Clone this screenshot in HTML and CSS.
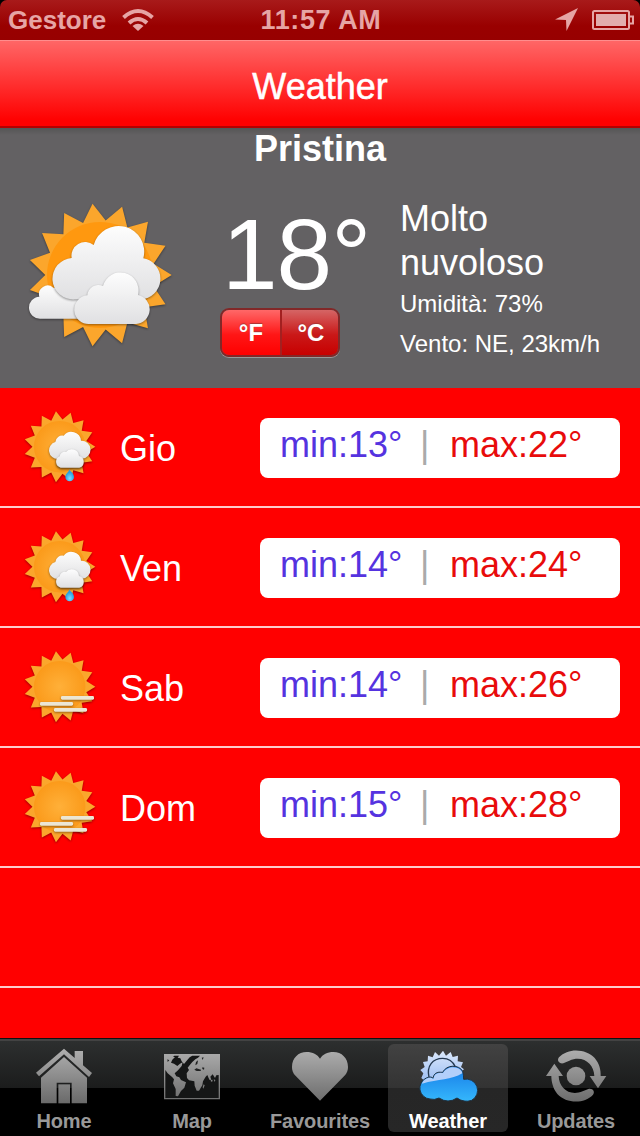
FILE: index.html
```html
<!DOCTYPE html>
<html lang="it">
<head>
  <meta charset="UTF-8" />
  <meta name="viewport" content="width=640" />
  <title>Weather</title>
  <link rel="stylesheet" href="styles.css">
</head>
<body>
  <!-- shared gradients and shapes -->
  <svg class="defs" width="0" height="0">
    <defs>
      <radialGradient id="sunDisc"><stop offset="0" stop-color="#ffb039"/><stop offset="1" stop-color="#fb9a1a"/></radialGradient>
      <linearGradient id="cloudFill" x1="0" y1="0" x2="0" y2="1"><stop offset="0" stop-color="#fdfdfd"/><stop offset="1" stop-color="#e0e0e2"/></linearGradient>
      <linearGradient id="tabFill" gradientUnits="userSpaceOnUse" x1="0" y1="85" x2="0" y2="250"><stop offset="0" stop-color="#b0b0b0"/><stop offset="1" stop-color="#6a6a6a"/></linearGradient>
      <linearGradient id="paleBlue" x1="0" y1="0" x2="0" y2="1"><stop offset="0" stop-color="#dce9fc"/><stop offset="1" stop-color="#9cbdf2"/></linearGradient>
      <linearGradient id="deepBlue" x1="0" y1="0" x2="0" y2="1"><stop offset="0" stop-color="#167be8"/><stop offset="1" stop-color="#35b7fb"/></linearGradient>
      <radialGradient id="dropFill" cy=".75"><stop offset="0" stop-color="#7fdcff"/><stop offset="1" stop-color="#2a9fe0"/></radialGradient>
      <symbol id="sun" viewBox="-72 -72 144 144" overflow="visible">
        <polygon fill="#fba62c" points="72,0 53.8,11.4 65.8,29.3 44.5,32.3 48.2,53.5 27.5,47.6 22.2,68.5 5.7,54.7 -7.5,71.6 -17,52.3 -36,62.4 -36.8,40.9 -58.2,42.3 -50.2,22.4 -70.4,15 -55,0 -70.4,-15 -50.2,-22.4 -58.2,-42.3 -36.8,-40.9 -36,-62.4 -17,-52.3 -7.5,-71.6 5.7,-54.7 22.2,-68.5 27.5,-47.6 48.2,-53.5 44.5,-32.3 65.8,-29.3 53.8,-11.4"/>
        <circle r="52" fill="url(#sunDisc)"/>
      </symbol>
      <symbol id="sun-rain" viewBox="60 51 240 240">
        <use href="#sun" class="cast" x="72" y="63" width="214" height="214"/>
        <g class="cast" fill="url(#cloudFill)" transform="translate(-4 0)">
          <path d="M178 207A26 26 0 0 1 170 156A21 21 0 0 1 195 137A29 29 0 0 1 247 152A27 27 0 0 1 250 206Z"/>
          <path class="cast" d="M186 233A18 18 0 0 1 183 199A15 15 0 0 1 202 186A22 22 0 0 1 241 198A18 18 0 0 1 242 233Z"/>
        </g>
        <path fill="url(#dropFill)" d="M208 238C211 245 222 250 222 261A13 13 0 0 1 196 261C196 251 207 247 208 238Z"/>
      </symbol>
      <symbol id="sun-haze" viewBox="60 51 240 240">
        <use href="#sun" class="cast" x="72" y="63" width="214" height="214"/>
        <g class="cast" fill="#ece6d3">
          <rect x="183" y="198" width="99" height="11" rx="4"/>
          <rect x="120" y="216" width="99" height="11" rx="4"/>
          <rect x="162" y="234" width="99" height="11" rx="4"/>
        </g>
      </symbol>
    </defs>
  </svg>

  <div class="screen">
    <header class="status-bar">
      <div class="carrier">
        <span>Gestore</span>
        <svg class="wifi" width="32" height="24" viewBox="0 0 32 24" fill="none" stroke="#e6a5a5" stroke-width="4">
          <path d="M1.500 9.500Q16 -3.500 30.500 9.500"/>
          <path d="M7 15Q16 7 25 15"/>
          <path d="M16 23L10.500 18Q16 13.500 21.500 18Z" fill="#e6a5a5" stroke="none"/>
        </svg>
      </div>
      <span class="clock">11:57 AM</span>
      <div class="indicators">
        <svg width="24" height="24" viewBox="0 0 24 24"><path d="M23 0L11.500 23L11 12L0 11.500Z" fill="#e6a5a5"/></svg>
        <svg width="42" height="20" viewBox="0 0 42 20">
          <rect x="1" y="1" width="36" height="18" rx="1.500" fill="none" stroke="#e6a5a5" stroke-width="2"/>
          <rect x="4" y="4" width="30" height="12" fill="#e2adad"/>
          <path d="M38 6.500H41V13.500H38" fill="none" stroke="#e6a5a5" stroke-width="2"/>
        </svg>
      </div>
    </header>

    <nav class="title-bar">Weather</nav>

    <section class="current">
      <h1 class="city">Pristina</h1>
      <div class="now">
        <svg class="now-icon" width="160" height="160" viewBox="60 45 480 480">
          <use href="#sun" class="cast" x="85" y="70" width="430" height="430"/>
          <circle cx="300" cy="285" r="159" fill="#ff980f"/>
          <g fill="url(#cloudFill)">
            <path class="cast" d="M122 416A33 33 0 0 1 118 350A26 26 0 0 1 160 323L250 340V416Z"/>
            <path class="cast" d="M224 358A62 62 0 0 1 215 234A41 41 0 0 1 281 195A76 76 0 0 1 430 235A62 62 0 0 1 422 358Z"/>
            <path class="cast" d="M270 432A43 43 0 0 1 262 346A33 33 0 0 1 309 318A54 54 0 0 1 414 345A44 44 0 0 1 408 432Z"/>
          </g>
        </svg>
        <div class="reading">
          <div class="temperature">18°</div>
          <div class="units">
            <span class="unit">°F</span>
            <span class="unit selected">°C</span>
          </div>
        </div>
        <div class="details">
          <p class="condition">Molto<br>nuvoloso</p>
          <p class="detail">Umidità: 73%</p>
          <p class="detail">Vento: NE, 23km/h</p>
        </div>
      </div>
    </section>

    <main class="forecast">
      <div class="day">
        <svg class="day-icon" width="80" height="80"><use href="#sun-rain"/></svg>
        <span class="day-name">Gio</span>
        <div class="range"><span class="min">min:13°</span><span class="bar">|</span><span class="max">max:22°</span></div>
      </div>
      <div class="day">
        <svg class="day-icon" width="80" height="80"><use href="#sun-rain"/></svg>
        <span class="day-name">Ven</span>
        <div class="range"><span class="min">min:14°</span><span class="bar">|</span><span class="max">max:24°</span></div>
      </div>
      <div class="day">
        <svg class="day-icon" width="80" height="80"><use href="#sun-haze"/></svg>
        <span class="day-name">Sab</span>
        <div class="range"><span class="min">min:14°</span><span class="bar">|</span><span class="max">max:26°</span></div>
      </div>
      <div class="day">
        <svg class="day-icon" width="80" height="80"><use href="#sun-haze"/></svg>
        <span class="day-name">Dom</span>
        <div class="range"><span class="min">min:15°</span><span class="bar">|</span><span class="max">max:28°</span></div>
      </div>
      <div class="day"></div>
    </main>

    <footer class="tab-bar">
      <div class="tab">
        <svg width="64" height="64" viewBox="96 72 192 192" fill="url(#tabFill)">
          <path d="M192 86L224 114V93H249V136L276 159L267 171L192 103L117 169L108 158Z"/>
          <path fill-rule="evenodd" d="M192 111L261 173V250H215V188H170V250H123V173Z"/>
          <path d="M175 193H210V250H175Z"/>
        </svg>
        <span>Home</span>
      </div>
      <div class="tab">
        <svg width="64" height="64" viewBox="480 72 192 192" fill="url(#tabFill)">
          <path d="M492 102H660V238H492Z"/>
          <path fill="#151616" d="M496 150L503 160L517 172L522 178L519 190L527 207V228L534 229L543 213L553 203L558 187L543 180L538 172L529 169L524 160L534 151L545 138L548 127L540 131L532 138L522 131L513 128L517 119L525 111H519L523 107H537L533 113L541 115L545 124L552 132L560 122L569 112L577 107H600L594 113L586 118L577 126L570 134L563 143L567 150L560 160L561 174L567 181L583 184L584 197L590 212H597L607 196L609 184L617 170L622 165L628 179L634 180L631 170L638 163L645 174L649 166L656 165V234H496Z"/>
          <path d="M632 181L637 179L638 184L633 185ZM641 178L646 180L644 186ZM611 193L614 196L610 206L608 202Z"/>
          <path fill="#202121" d="M588 126L594 121L592 132L586 136ZM583 149L589 145L603 149L602 153L590 153ZM607 142L613 143L612 149L607 147ZM605 113L611 112L608 120ZM502 118L508 121L503 126Z"/>
        </svg>
        <span>Map</span>
      </div>
      <div class="tab">
        <svg width="64" height="64" viewBox="114 72 192 192" fill="url(#tabFill)">
          <path d="M210 242L138 169C128 159 126 150 126 141C126 114 145 96 170 96C188 96 202 103 210 116C218 103 232 96 250 96C275 96 294 114 294 141C294 150 292 159 282 169Z"/>
        </svg>
        <span>Favourites</span>
      </div>
      <div class="tab active">
        <svg width="64" height="64" viewBox="498 72 192 192">
          <path fill="url(#paleBlue)" d="M514 174L520 160L511 150L524 141L519 126L533 124L534 107L548 112L555 96L567 107L579 92L588 107L602 96L608 111L624 107L623 124L639 127L633 141L642 148L630 158L632 184H525Z"/>
          <path fill="none" stroke="#243850" stroke-width="4" d="M537 172C529 138 548 115 578 115C598 115 610 127 616 140"/>
          <path fill="url(#deepBlue)" stroke="#20303e" stroke-width="3" d="M540 237A33 33 0 0 1 529 174Q545 168 549 175Q552 153 578 157C590 133 627 133 638 154Q641 165 641 178A34 34 0 0 1 665 241Q642 249 621 234Q594 252 567 234Q553 241 540 237Z"/>
          <path fill="#b3cffa" d="M516 191C520 176 540 168 550 177Q553 155 579 159C591 137 624 137 635 154L637 160C604 180 566 177 516 191Z"/>
        </svg>
        <span>Weather</span>
      </div>
      <div class="tab">
        <svg width="64" height="64" viewBox="192 72 192 192" fill="url(#tabFill)">
          <circle cx="288" cy="168" r="28"/>
          <path d="M237 112C265 82 318 86 344 114C358 131 363 150 362 168H379L354 205L329 168H343C342 132 309 104 268 122L250 130C236 132 230 120 237 112Z"/>
          <path d="M339 224C311 254 258 250 232 222C219 205 214 186 214 168H198L223 131L249 168H236C237 204 268 230 308 214L325 207C339 204 346 216 339 224Z"/>
        </svg>
        <span>Updates</span>
      </div>
    </footer>
  </div>
</body>
</html>
```
FILE: styles.css
```css
* {
  box-sizing: border-box;
}

body {
  margin: 0;
  background: #000;
  font-family: "Liberation Sans", Arial, sans-serif;
  color: #fff;
}

svg {
  display: block;
  flex: none;
}

.defs {
  position: absolute;
}

.cast {
  filter: drop-shadow(0 3px 3px rgba(0, 0, 0, 0.4));
}

.screen {
  display: flex;
  flex-direction: column;
  width: 640px;
  height: 1136px;
  overflow: hidden;
}

/* Status bar */
.status-bar {
  display: grid;
  grid-template-columns: 1fr auto 1fr;
  align-items: center;
  height: 40px;
  padding: 0 6px 0 8px;
  border-radius: 7px 7px 0 0;
  background: linear-gradient(#a81a1a, #990000 65%, #970000);
  color: #e6a5a5;
  font-size: 26px;
  font-weight: bold;
}

.clock {
  font-size: 27px;
  letter-spacing: 0.6px;
}

.carrier,
.indicators {
  display: flex;
  align-items: center;
  gap: 16px;
}

.indicators {
  justify-content: flex-end;
  gap: 13px;
}

.title-bar {
  height: 88px;
  border-top: 1px solid #ff8d8d;
  border-bottom: 2px solid #b60000;
  background: linear-gradient(#ff6666, #ff0000 94%);
  font-size: 36px;
  line-height: 91px;
  text-align: center;
  -webkit-text-stroke: 0.5px #fff;
}

/* Current conditions */
.current {
  height: 260px;
  background: linear-gradient(#555 0, #636163 7px);
}

.city {
  margin: 0;
  font-size: 36px;
  line-height: 42px;
  text-align: center;
}

.now {
  display: grid;
  grid-template-columns: 200px 180px 1fr;
  padding-left: 20px;
}

.now-icon {
  margin-top: 25px;
}

.temperature {
  height: 138px;
  padding: 27px 0 0 2px;
  font-size: 100px;
  line-height: 115px;
  letter-spacing: -1px;
}

.units {
  display: flex;
  width: 120px;
  height: 49px;
  border: 2px solid #822828;
  border-radius: 9px;
  box-shadow: 0 1px 0 #999;
  overflow: hidden;
}

.unit {
  width: 59px;
  background: linear-gradient(#ff6868, #ff1616 55%, #ff0000);
  font-size: 24px;
  font-weight: bold;
  line-height: 45px;
  text-align: center;
  text-shadow: 0 -1px 1px #a33;
}

.unit.selected {
  padding-left: 2px;
  border-left: 2px solid #a32020;
  background: linear-gradient(#d56565, #ca1818 55%, #c80000);
}

.details p {
  margin: 0;
}

.details .condition {
  padding-top: 27px;
  font-size: 36px;
  line-height: 44px;
}

.detail {
  font-size: 24px;
  line-height: 40px;
}

.details .condition + .detail {
  margin-top: -1px;
}

/* Forecast list */
.forecast {
  height: 650px;
  background: #ff0000;
}

.day {
  display: flex;
  align-items: center;
  height: 120px;
  padding: 0 20px;
  border-bottom: 2px solid #ffcaca;
  font-size: 36px;
}

.day-name {
  width: 160px;
  padding: 4px 0 0 20px;
}

.range {
  display: flex;
  flex: 1;
  height: 60px;
  margin-top: 2px;
  padding: 0 20px;
  border-radius: 8px;
  background: #fff;
  line-height: 54px;
}

.min {
  width: 140px;
  color: #5533e0;
}

.bar {
  width: 30px;
  color: #aaa;
}

.max {
  color: #e80b0b;
}

/* Tab bar */
.tab-bar {
  display: flex;
  height: 98px;
  padding-top: 6px;
  background: linear-gradient(#111 0, #111 1px, #434343 1px, #434343 3px, #2d2f2f 3px, #1b1c1c 50px, #000 50px);
}

.tab {
  display: flex;
  flex: none;
  flex-direction: column;
  align-items: center;
  width: 128px;
  height: 88px;
  color: #999;
  font-size: 20px;
  font-weight: bold;
  line-height: 27px;
  letter-spacing: -0.1px;
}

.tab.active {
  width: 120px;
  margin: 0 4px;
  border-radius: 6px;
  background: linear-gradient(#424242, #333 50%, #262626 50%, #272727);
  color: #fff;
}
```
